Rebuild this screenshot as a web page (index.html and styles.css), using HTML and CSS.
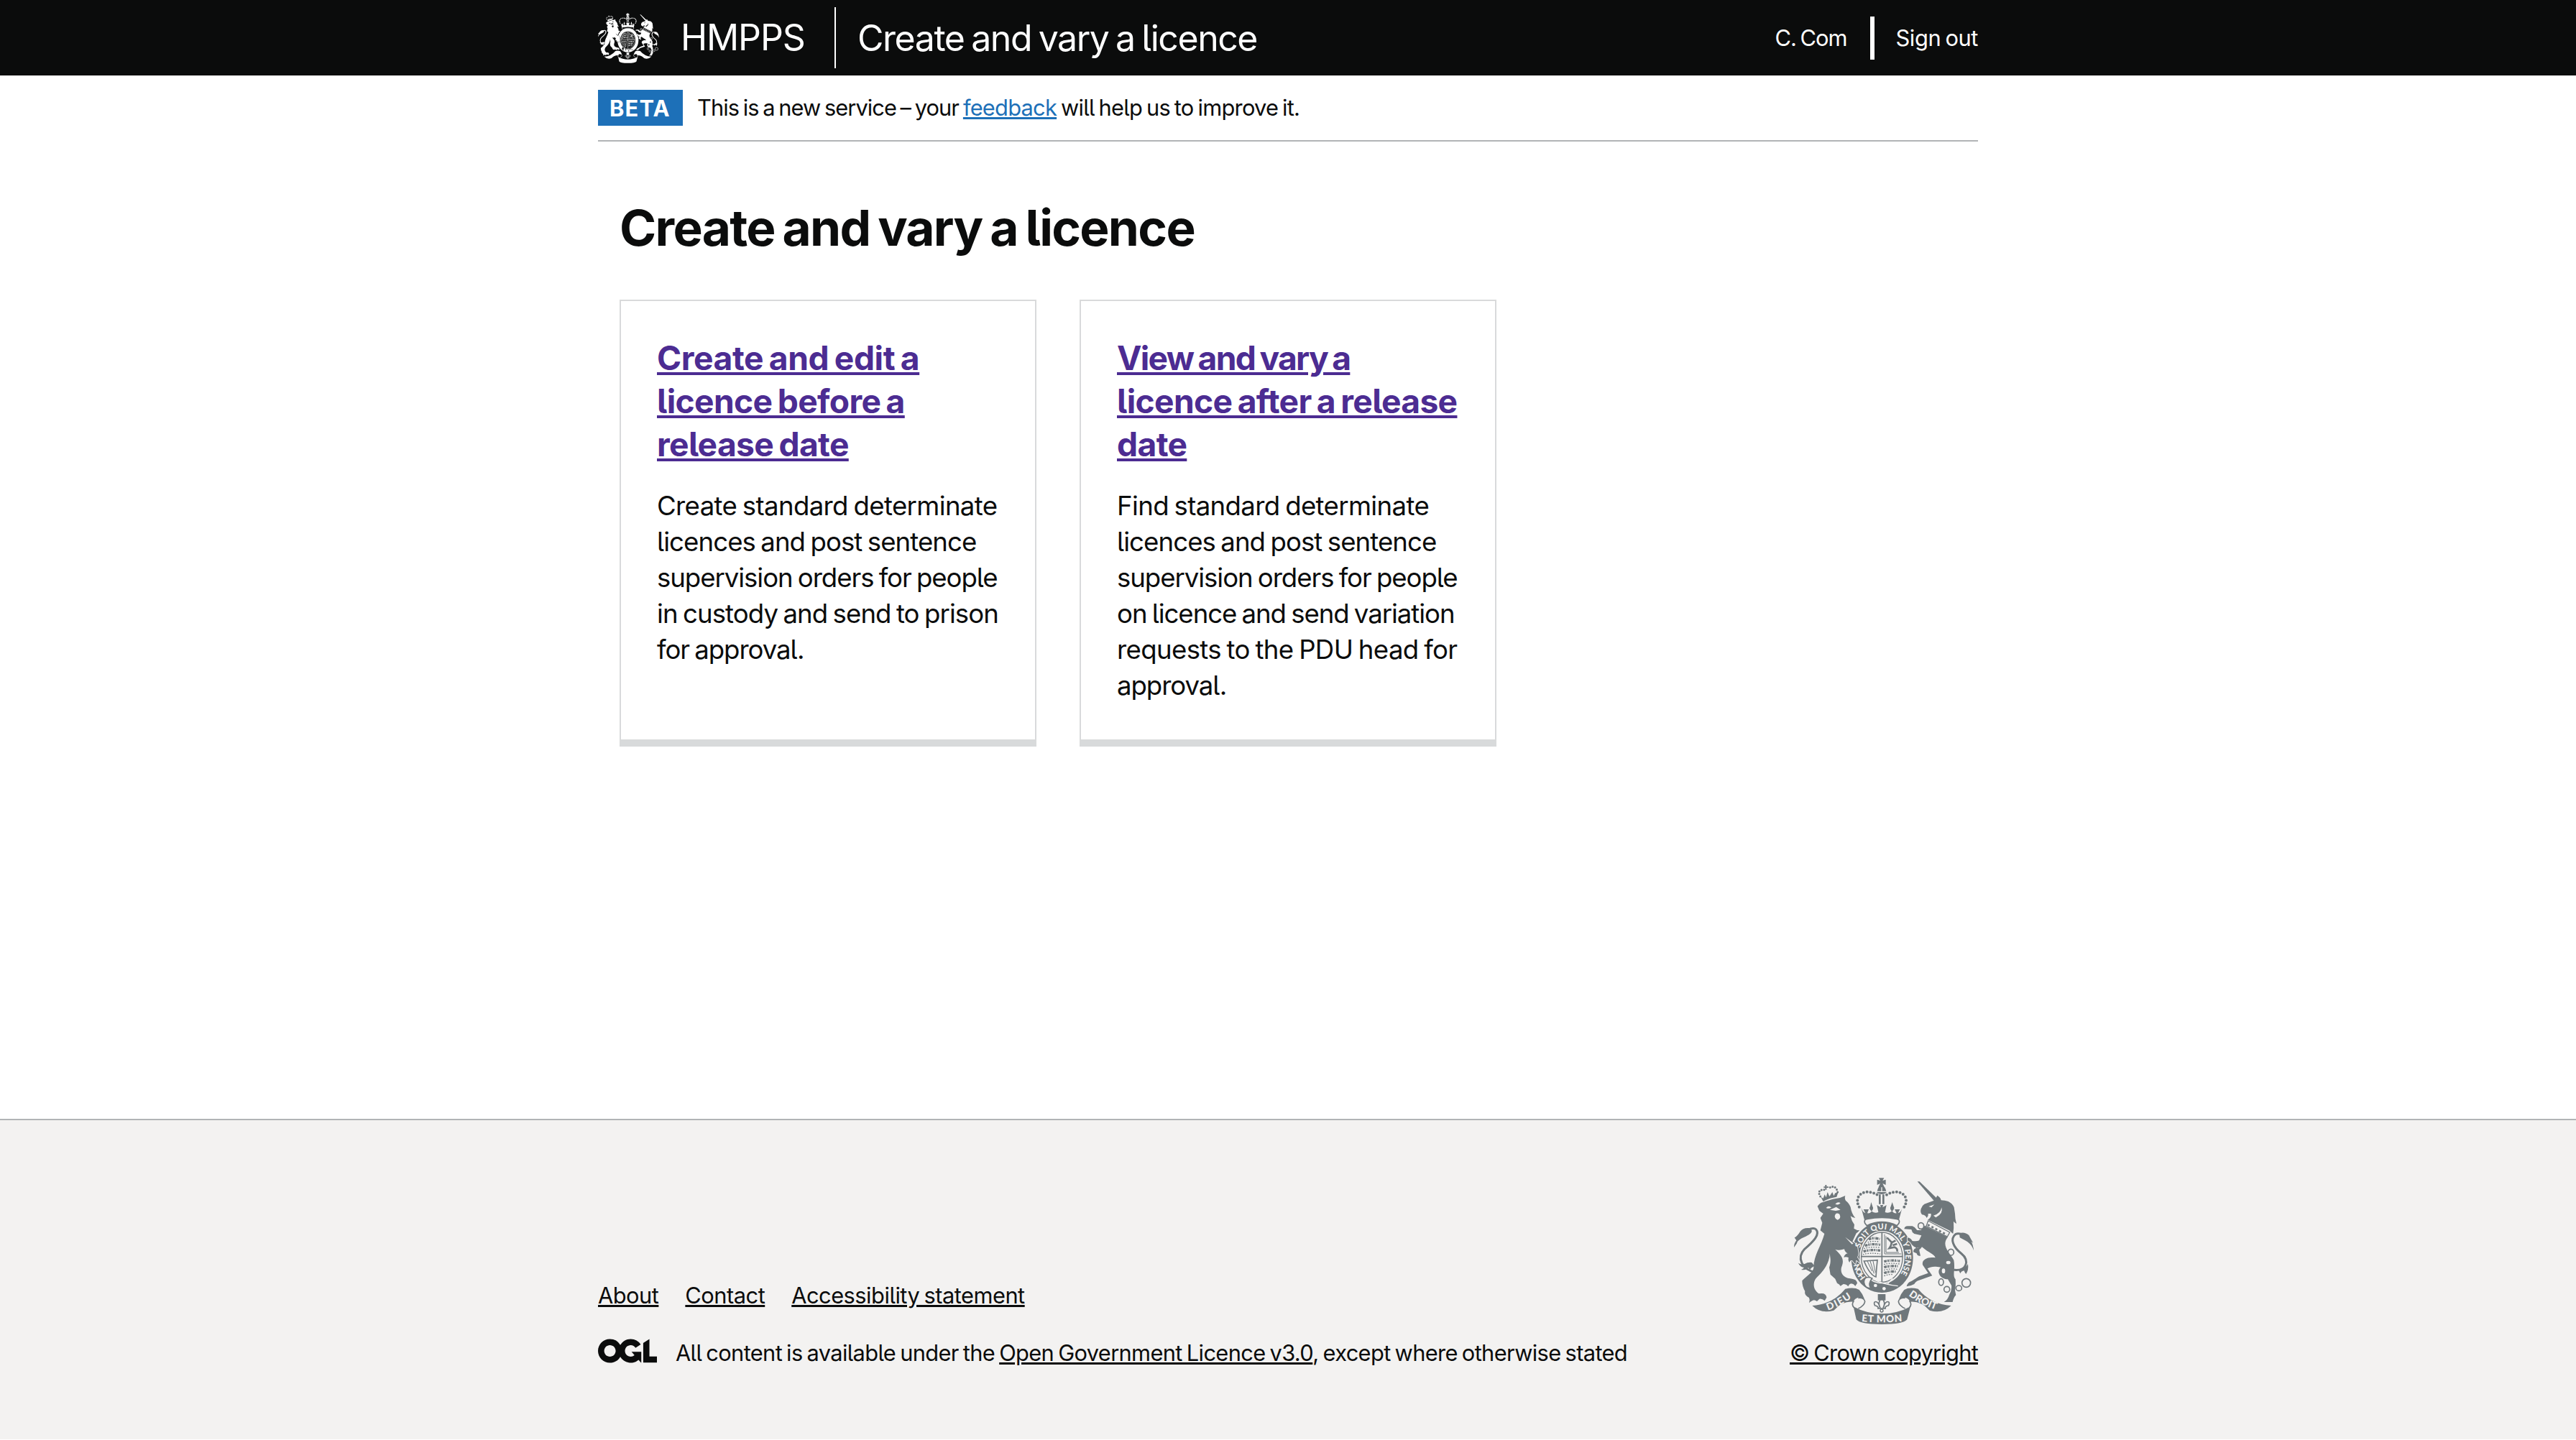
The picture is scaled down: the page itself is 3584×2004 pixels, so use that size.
FILE: index.html
```html
<!DOCTYPE html>
<html lang="en">
<head>
<meta charset="utf-8">
<title>Create and vary a licence</title>
<link rel="stylesheet" href="styles.css">
</head>
<body>
<svg class="sprite" aria-hidden="true">
  <defs>
    <symbol id="crest" viewBox="78 56 750 612">
      <g fill="currentColor">
        <!-- garter -->
        <path fill-rule="evenodd" d="M445 240C520 240 575 306 575 388C575 472 520 536 445 536C372 536 317 472 317 388C317 306 372 240 445 240ZM445 278C392 278 352 326 352 388C352 450 392 498 445 498C500 498 539 450 539 388C539 326 500 278 445 278Z"/>
        <!-- lion -->
        <path class="crest-outline" d="M176 175Q186 160 200 158Q236 144 270 140L292 131Q288 142 294 152Q306 160 314 178Q318 206 334 224Q324 224 314 216Q318 236 330 252L328 268Q340 276 352 276Q342 286 338 288L322 322Q344 332 345 360Q350 376 342 388Q352 398 352 412Q344 402 336 400Q338 410 334 416Q326 410 322 402Q312 398 310 410Q302 402 306 390Q296 384 286 388Q290 374 302 372Q290 366 288 354Q264 362 250 355C272 378 292 392 276 430C270 455 285 475 320 478Q340 480 342 496L334 508Q326 498 316 498Q308 500 304 510Q296 500 284 500L272 508Q268 500 258 496L250 478L230 460L225 430C236 400 226 384 228 370C225 420 196 450 168 478C155 500 160 525 182 540Q212 534 214 556L206 570Q196 560 184 562L174 572Q164 564 156 568L140 578Q146 566 140 556Q120 546 124 530Q112 510 112 486C125 470 160 450 160 430C160 380 192 340 205 290L188 276L196 244L188 224L200 206L184 194Z"/>
        <path d="M78 347Q78 330 88 318L80 306Q92 300 104 280Q116 264 140 266Q154 270 152 282C140 304 96 306 90 330Z"/>
        <path d="M96 412Q106 420 122 416Q136 408 152 410L164 424Q150 430 144 440L138 432Q124 444 108 440Q118 436 120 430Q104 430 96 412Z"/>
        <!-- unicorn -->
        <path d="M593 72L602 72L676 144L664 154Z"/>
        <path d="M676 130Q690 138 692 150Q708 150 722 155Q740 164 746 180L750 206Q750 228 756 248Q748 244 744 238Q746 266 742 290Q736 286 726 276L636 232Q652 222 650 206L638 206Q640 216 632 224Q628 212 612 210Q604 200 608 186Q612 172 622 166L654 154L666 150Z"/>
        <path class="crest-outline" d="M624 256L720 304C690 340 730 370 745 400C752 440 738 465 752 480Q754 510 750 526L754 546Q744 556 740 575L704 575Q720 566 726 545Q738 524 735 505L720 480C690 480 670 450 690 430C660 424 650 428 635 435L655 465L600 484Q586 488 580 500Q566 508 548 510Q552 492 568 488L600 468L638 454L615 420C610 395 640 385 668 390C664 375 640 370 612 345Q598 350 602 364L606 382Q592 384 590 372L576 366Q576 352 588 350L600 350Q574 348 564 326L552 318V306Q566 308 572 320Q592 322 600 318L610 297L580 290Q570 284 568 272L538 270Q540 258 552 258H572Q584 262 592 275H608Z"/>
        <path d="M828 360Q826 336 818 322L826 328Q816 312 808 296Q790 280 768 288L770 306C792 318 818 326 828 360Z"/>
        <path d="M766 444Q782 440 790 428Q798 428 804 416Q808 440 796 458Q790 452 788 444Q776 446 772 456Z"/>
        <!-- imperial crown -->
        <path d="M432 57H454L448 68L461 64V86L448 80L455 95H431L438 80L425 86V64L438 68Z"/>
        <path d="M424 118Q428 90 443 90Q460 90 464 118Q444 132 424 118Z"/>
        <path d="M432 126H440V166H432ZM447 126H455V166H447Z"/>
        <path d="M358 180Q364 200 376 204L368 188H390L384 204Q396 206 402 196Q388 184 396 176L400 158L406 176Q412 184 402 196Q416 206 430 200L424 170L440 180L438 170H450L448 180L464 170L458 200Q472 206 486 196Q476 184 482 176L488 158L494 176Q500 184 488 196Q496 206 506 204L498 188H520L512 204Q526 200 530 180L514 240Q444 212 374 240Z"/>
        <!-- lion crown -->
        <path d="M190 136L200 142L206 126L212 138L218 116L226 134L238 116L244 132L250 120L262 118L256 136Q222 140 200 156Z"/>
        <path d="M208 86H214V106H208ZM202 93H222V98H202Z"/>
        <!-- ribbons -->
        <path d="M154 590Q240 584 292 520Q330 512 350 524Q364 540 372 562L346 556Q330 560 326 574Q280 570 244 610Q190 626 154 590Z"/>
        <path d="M734 590Q648 584 596 520Q558 512 538 524Q524 540 516 562L542 556Q558 560 562 574Q608 570 644 610Q698 626 734 590Z"/>
        <path d="M326 594Q380 624 445 624Q510 624 564 594L550 648Q534 668 445 668Q354 668 338 648Z"/>
        <path d="M428 542H460V568H428Z"/>
      </g>
      <g fill="none" stroke="currentColor">
        <path stroke-width="9" d="M170 452C110 440 88 390 122 354C160 322 188 292 170 272Q160 262 136 274"/>
        <path stroke-width="9" d="M740 440C800 450 812 400 778 374C742 346 728 312 752 292Q768 284 796 302"/>
        <g stroke-width="12" stroke-linecap="round" stroke-dasharray="0 14.500">
          <path d="M350 178C328 138 360 112 390 116Q412 118 430 130"/>
          <path d="M538 178C562 138 528 112 500 116Q478 118 460 130"/>
        </g>
        <g stroke-width="9" stroke-linecap="round" stroke-dasharray="0 11">
          <path d="M188 134C174 112 190 104 204 106"/>
          <path d="M260 116C254 88 234 90 222 102"/>
        </g>
        <!-- ribbon curls -->
        <path stroke-width="5" d="M346 558Q372 556 374 574Q370 592 346 602M328 570Q316 584 328 598M542 558Q516 556 514 574Q518 592 542 602M560 570Q572 584 560 598"/>
        <ellipse cx="445" cy="388" rx="86" ry="104" stroke-width="4"/>
        <path stroke-width="5" d="M445 284V492M358 385H532"/>
        <!-- quarterings -->
        <g stroke-width="10" stroke-dasharray="12 3 6 3 3 3">
          <path d="M390 314Q404 304 436 312M374 340Q400 330 438 336M368 364Q396 354 438 360"/>
          <path d="M454 406Q480 398 520 404M454 430Q480 422 514 426M454 454Q476 446 502 448"/>
        </g>
        <g stroke-width="4" stroke-dasharray="5 5">
          <path d="M386 326Q404 318 436 324M370 352Q400 342 438 348M366 376Q396 368 438 374"/>
          <path d="M454 418Q480 410 518 416M454 442Q480 434 508 438M454 466Q476 458 490 460"/>
        </g>
        <path stroke-width="3" d="M456 292V374H526M462 300V368H516"/>
        <path stroke-width="8" d="M466 306L486 326Q484 340 476 350L498 346Q512 352 508 364M484 328L502 318M490 338L508 332"/>
        <path stroke-width="5" d="M370 404L426 400Q422 436 420 470Q396 464 370 404Z"/>
        <path stroke-width="3" d="M384 404L404 446M396 404L412 456M408 404L418 452"/>
        <!-- pendant fleur-de-lis -->
        <path stroke-width="5" d="M444 556C430 574 430 584 438 600M444 556C458 574 458 584 450 600M436 596C428 564 404 570 416 590Q426 590 432 602M452 596C460 564 484 570 472 590Q462 590 456 602M426 602H462"/>
        <circle cx="444" cy="611" r="6" stroke-width="4"/>
        <g stroke-width="5">
          <circle cx="797" cy="495" r="18"/><ellipse cx="766" cy="517" rx="12" ry="11"/><circle cx="716" cy="522" r="12"/><ellipse cx="692" cy="492" rx="10" ry="14"/><ellipse cx="608" cy="257" rx="12" ry="13"/>
        </g>
      </g>
      <!-- knocked-out detail -->
      <g class="crest-cut">
        <path d="M212 182Q222 170 234 180Q224 188 212 182ZM250 166Q262 154 272 162Q264 172 250 166ZM248 216Q252 198 268 208Q276 226 260 232Q248 228 248 216ZM228 190L254 178L272 190L252 194Z"/>
        <path d="M292 304L326 330L320 334Z"/>
        <path d="M640 176L664 168L652 180ZM660 214Q690 206 694 180Q702 206 670 222Z"/>
        <path d="M424 112H464V116H424ZM442 96H446V112H442Z"/>
        <path d="M636 232L732 282L720 304L628 260Z"/>
        <circle cx="418" cy="506" r="7"/><circle cx="454" cy="519" r="7"/>
        <ellipse cx="702" cy="445" rx="7" ry="10"/><ellipse cx="722" cy="410" rx="9" ry="7"/>
      </g>
      <path class="crest-cushion" stroke="currentColor" stroke-width="5" d="M374 246Q368 230 384 228Q445 216 506 228Q522 230 516 246L508 256Q445 226 382 256Z"/>
      <g class="crest-cut-line" fill="none">
        <path stroke-width="4" d="M404 478Q450 502 512 508M490 476Q480 486 468 500"/>
      </g>
      <g fill="none" stroke="currentColor">
        <path class="crest-buckle" stroke-width="5" d="M404 476Q372 462 370 492Q374 520 398 516Q386 500 404 476Z"/>
        <path stroke-width="4" d="M638 236L728 284L718 302L630 258Z"/>
        <path stroke-width="8" stroke-dasharray="9 9" d="M636 252L716 294"/>
        <ellipse cx="598" cy="340" rx="11" ry="13" stroke-width="5"/><ellipse cx="733" cy="367" rx="12" ry="13" stroke-width="5"/>
      </g>
    </symbol>
  </defs>
</svg>

<header class="header">
  <div class="container header-inner">
    <svg class="header-crest" role="img" aria-label="Royal coat of arms"><use href="#crest"/></svg>
    <a class="header-org" href="#">HMPPS</a>
    <a class="header-title" href="#">Create and vary a licence</a>
    <nav class="header-user">
      <span class="user-name">C. Com</span>
      <a class="sign-out" href="#">Sign out</a>
    </nav>
  </div>
</header>

<div class="container phase-banner">
  <strong class="phase-tag">BETA</strong>
  <span class="phase-text"><span class="phase-lead">This is a new service – your</span> <a class="link" href="#">feedback</a> will help us to improve it.</span>
</div>

<main class="container main">
  <h1 class="heading">Create and vary a licence</h1>
  <div class="cards">
    <section class="card">
      <h2 class="card-title"><a class="card-link" href="#"><span class="title-loose">Create and edit a</span><br>licence before a<br>release date</a></h2>
      <p class="card-text"><span class="loose">Create standard determinate</span><br>licences and post sentence<br><span class="tight">supervision orders for people</span><br>in custody and send to prison<br><span class="tight">for approval.</span></p>
    </section>
    <section class="card">
      <h2 class="card-title"><a class="card-link" href="#"><span class="title-tight">View and vary a</span><br>licence after a release<br>date</a></h2>
      <p class="card-text"><span class="loose">Find standard determinate</span><br>licences and post sentence<br><span class="tight">supervision orders for people</span><br><span class="tight">on licence and send variation</span><br><span class="loose">requests to the PDU head for</span><br><span class="tight">approval.</span></p>
    </section>
  </div>
</main>

<footer class="footer">
  <div class="container footer-inner">
    <div class="footer-meta">
      <nav class="footer-links">
        <a href="#">About</a>
        <a href="#">Contact</a>
        <a href="#">Accessibility statement</a>
      </nav>
      <div class="footer-licence">
        <svg class="ogl" viewBox="0 0 483.2 195.7" role="img" aria-label="Open Government Licence"><path fill="currentColor" d="M421.500 142.800V.1l-50.700 32.300v161.100h112.400v-50.700zm-122.300-9.600A47.120 47.120 0 0 1 221 97.800c0-26 21.100-47.100 47.100-47.100 16.700 0 31.400 8.700 39.700 21.800l42.700-27.200A97.630 97.630 0 0 0 268.100 0c-36.500 0-68.300 20.100-85.100 49.700A98 98 0 0 0 97.800 0C43.900 0 0 43.900 0 97.800s43.900 97.800 97.800 97.800c36.500 0 68.300-20.100 85.100-49.700a97.760 97.760 0 0 0 149.600 25.400l19.400 22.200h3v-87.800h-80l24.300 27.500zM97.800 145c-26 0-47.100-21.100-47.100-47.100s21.100-47.100 47.100-47.100 47.100 21.100 47.100 47.100S123.800 145 97.800 145"/></svg>
        <span class="licence-text">All content is available under the <a href="#">Open Government Licence v3.0</a>, except where otherwise stated</span>
      </div>
    </div>
    <div class="footer-copyright">
      <svg class="footer-crest" viewBox="78 56 750 612" role="img" aria-label="Royal coat of arms">
        <use href="#crest" x="78" y="56" width="750" height="612"/>
        <defs>
          <path id="motto-left" d="M220 610Q282 588 336 544"/>
          <path id="motto-mid" d="M340 654Q445 666 550 654"/>
          <path id="motto-right" d="M556 548Q612 590 684 612"/>
          <path id="garter-left" d="M378 472A97 116 0 0 1 349 408"/>
          <path id="garter-right" d="M354 350A97 116 0 1 1 507 477"/>
        </defs>
        <g class="motto">
          <text><textPath href="#motto-left" textLength="112">DIEU</textPath></text>
          <text><textPath href="#motto-mid" startOffset="20" textLength="170">ET MON</textPath></text>
          <text><textPath href="#motto-right" textLength="128">DROIT</textPath></text>
        </g>
        <g class="garter-text">
          <text><textPath href="#garter-left" textLength="66">HON</textPath></text>
          <text><textPath href="#garter-right" textLength="372">SOIT QUI MAL Y PENSE</textPath></text>
        </g>
      </svg>
      <a href="#">© Crown copyright</a>
    </div>
  </div>
</footer>
</body>
</html>
```
FILE: styles.css
```css
* { box-sizing: border-box; }

body {
  margin: 0;
  background: #fff;
  color: #0b0c0c;
  font-family: Inter, "Liberation Sans", sans-serif;
  font-feature-settings: "cv05";
  font-size: 30.8px;
  line-height: 40px;
  letter-spacing: -0.5px;
  word-spacing: -2px;
  display: flex;
  flex-direction: column;
  height: 2003px;
}

a {
  color: inherit;
  text-decoration-thickness: 3px;
  text-underline-offset: 2px;
}

.sprite { display: none; }

.container {
  width: 1920px;
  margin: 0 auto;
}

/* Header */
.header {
  height: 105px;
  flex: none;
  background: #0b0c0c;
  border-bottom: 1px solid #000;
  color: #fff;
  --crest-bg: #0b0c0c;
}

.header a { text-decoration: none; }

.header-inner {
  height: 105px;
  display: flex;
  align-items: center;
  font-size: 50px;
  white-space: nowrap;
}

.header-crest {
  width: 85px;
  height: 70px;
  flex: none;
}

.header-org {
  width: 246px;
  height: 85px;
  line-height: 84px;
  padding-left: 30px;
  border-right: 2px solid #fff;
  letter-spacing: -1.1px;
}

.header-title {
  padding-left: 30px;
  line-height: 84px;
  letter-spacing: -1.45px;
  word-spacing: -3px;
}

.header-user {
  margin-left: auto;
  display: flex;
  align-items: center;
  font-size: 30.8px;
}

.user-name {
  height: 60px;
  line-height: 60px;
  padding-right: 33px;
  margin-right: 29px;
  border-right: 6px solid #fff;
  letter-spacing: -1px;
}

.sign-out { letter-spacing: -0.4px; }

/* Phase banner */
.phase-banner {
  height: 92px;
  flex: none;
  display: flex;
  align-items: center;
  border-bottom: 2px solid #b1b4b6;
}

.phase-tag {
  width: 118px;
  height: 50px;
  line-height: 51px;
  padding-left: 16px;
  background: #1d70b8;
  color: #fff;
  letter-spacing: 1.2px;
}

.phase-text {
  margin-left: 20px;
  letter-spacing: -0.75px;
}

.phase-lead { letter-spacing: -0.95px; }

.link { color: #1d70b8; }

/* Main */
.main {
  flex: 1;
  padding: 80px 30px 0;
}

.heading {
  margin: 0 0 60px;
  font-size: 69.3px;
  line-height: 80px;
  letter-spacing: -1.7px;
  word-spacing: -4px;
}

.cards {
  display: flex;
  gap: 60px;
}

.card {
  width: 580px;
  height: 622px;
  padding: 49px 50px 50px;
  border: 2px solid #d9dadb;
  border-bottom: 10px solid #d8dadb;
  white-space: nowrap;
}

.card-title {
  margin: 0 0 31px;
  font-size: 46.2px;
  line-height: 60px;
  letter-spacing: -0.65px;
  word-spacing: -3px;
}

.title-loose { letter-spacing: -0.4px; }
.title-tight { letter-spacing: -1.7px; }

.card-link {
  color: #4c2c92;
  text-decoration-thickness: 4px;
  text-underline-offset: 3px;
}

.card-text {
  margin: 0;
  font-size: 36.6px;
  line-height: 50px;
  letter-spacing: -0.92px;
}

.loose { letter-spacing: -0.64px; }
.tight { letter-spacing: -1.05px; }

/* Footer */
.footer {
  flex: none;
  height: 446px;
  padding-bottom: 100px;
  background: #f3f2f1;
  border-top: 2px solid #b1b4b6;
  --crest-bg: #f3f2f1;
}

.footer-inner {
  height: 100%;
  display: flex;
  justify-content: space-between;
  align-items: flex-end;
}

.footer-meta,
.footer-copyright {
  display: flex;
  flex-direction: column;
}

.footer-meta { gap: 40px; }

.footer-links {
  display: flex;
  gap: 37px;
}

.footer-licence {
  display: flex;
  align-items: flex-start;
}

.ogl {
  width: 82px;
  height: 34px;
}

.licence-text {
  margin-left: 26px;
  letter-spacing: -0.64px;
}

.footer-copyright {
  align-items: flex-end;
  gap: 20px;
  letter-spacing: -0.75px;
}

.footer-crest {
  width: 250px;
  height: 204px;
  margin-right: 6px;
  color: #6f777b;
}

/* Coat of arms */
.crest-cut { fill: var(--crest-bg); }
.crest-cut-line { stroke: var(--crest-bg); }

.crest-cushion,
.crest-buckle { fill: var(--crest-bg); }

.crest-outline {
  stroke: var(--crest-bg);
  stroke-width: 5px;
  paint-order: stroke;
}

.motto,
.garter-text {
  fill: #f3f2f1;
  font-family: Lato, "Liberation Sans", sans-serif;
  font-weight: 900;
  font-size: 41px;
  letter-spacing: 0;
  word-spacing: 0;
}

.garter-text { font-size: 33px; }
```
